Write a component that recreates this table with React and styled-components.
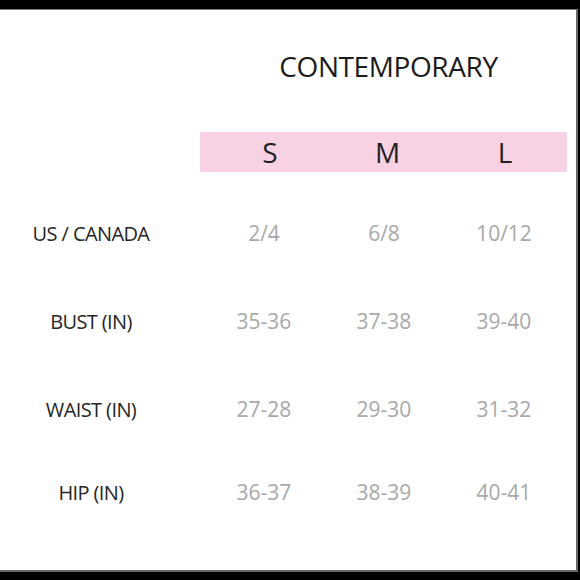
import React from "react";
import styled, { createGlobalStyle } from "styled-components";

const GlobalStyle = createGlobalStyle`
  html, body {
    margin: 0;
    padding: 0;
    background: #000;
  }
  body {
    font-family: "Open Sans", "Liberation Sans", sans-serif;
  }
`;

const Screen = styled.div`
  width: 580px;
  height: 580px;
  box-sizing: border-box;
  padding: 9px 2px 8px 0;
  background: #000;
`;

const Sheet = styled.div`
  height: 100%;
  box-sizing: border-box;
  background: #fff;
  border-top: 1px solid #7a7a7a;
  border-right: 2px solid #6a6a6a;
  border-bottom: 2px solid #6a6a6a;
  display: flex;
  flex-direction: column;
  padding-top: 36px;
`;

const Title = styled.h1`
  margin: 0 12px 0 213px;
  height: 40px;
  line-height: 40px;
  font-size: 28px;
  font-weight: 400;
  letter-spacing: -0.4px;
  color: #1c1c1c;
  text-align: center;
`;

const SizeBand = styled.div`
  margin: 46px 9px 0 200px;
  height: 40px;
  padding: 0 3px 0 11px;
  background: #f8d2e4;
  display: grid;
  grid-template-columns: repeat(3, 1fr);
`;

const SizeName = styled.div`
  line-height: 40px;
  font-size: 28px;
  color: #222;
  text-align: center;
`;

const Rows = styled.div`
  margin-top: 17px;
`;

const Row = styled.div`
  display: grid;
  grid-template-columns: 204px repeat(3, 120px);
  align-items: center;
  height: ${(p) => p.$height}px;
`;

const Label = styled.div`
  padding-right: 22px;
  font-size: 20px;
  font-weight: 500;
  letter-spacing: -0.6px;
  color: #262626;
  text-align: center;
`;

const Value = styled.div`
  font-size: 21px;
  color: #a8a8a8;
  text-align: center;
`;

const SIZES = ["S", "M", "L"];

const MEASURES = [
  { label: "US / CANADA", values: ["2/4", "6/8", "10/12"], height: 88 },
  { label: "BUST (IN)", values: ["35-36", "37-38", "39-40"], height: 88 },
  { label: "WAIST (IN)", values: ["27-28", "29-30", "31-32"], height: 88 },
  { label: "HIP (IN)", values: ["36-37", "38-39", "40-41"], height: 78 },
];

export default function App() {
  return (
    <>
      <GlobalStyle />
      <Screen>
        <Sheet>
          <Title>CONTEMPORARY</Title>
          <SizeBand>
            {SIZES.map((size) => (
              <SizeName key={size}>{size}</SizeName>
            ))}
          </SizeBand>
          <Rows>
            {MEASURES.map((row) => (
              <Row key={row.label} $height={row.height}>
                <Label>{row.label}</Label>
                {row.values.map((v) => (
                  <Value key={v}>{v}</Value>
                ))}
              </Row>
            ))}
          </Rows>
        </Sheet>
      </Screen>
    </>
  );
}
